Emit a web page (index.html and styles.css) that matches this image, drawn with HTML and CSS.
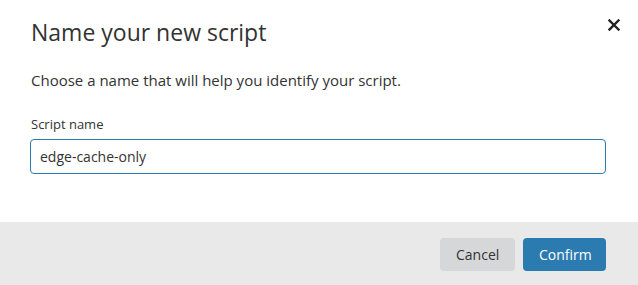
FILE: index.html
```html
<!DOCTYPE html>
<html lang="en">
  <head>
    <meta charset="UTF-8" />
    <meta name="viewport" content="width=device-width, initial-scale=1.0" />
    <title>Name your new script</title>
    <link rel="stylesheet" href="styles.css">
  </head>

  <body>
    <div class="modal">
      <div class="modal-header">
        <h2>Name your new script</h2>
        <button class="close-btn" aria-label="Close">
          <svg width="12" height="12" viewBox="0 0 12 12">
            <path d="M1.5 1.5 L10.5 10.5 M10.5 1.5 L1.5 10.5" stroke="#222" stroke-width="2.4" stroke-linecap="square" />
          </svg>
        </button>
      </div>

      <div class="modal-body">
        <p class="intro">Choose a name that will help you identify your script.</p>

        <div class="form-group">
          <label for="scriptName">Script name</label>
          <input type="text" id="scriptName" value="edge-cache-only" />
        </div>
      </div>

      <div class="modal-footer">
        <button class="btn btn-secondary">Cancel</button>
        <button class="btn btn-primary">Confirm</button>
      </div>
    </div>
  </body>
</html>
```

FILE: styles.css
```css
:root {
  --text-color: #333;
  --primary-color: #2b7bb1;
  --footer-bg: #e8e9e8;
}

* {
  margin: 0;
  padding: 0;
  box-sizing: border-box;
  font-family: "Open Sans", "Noto Sans", sans-serif;
}

body {
  background: #fff;
  width: 638px;
  height: 285px;
  overflow: hidden;
}

.modal {
  width: 638px;
  height: 285px;
  display: flex;
  flex-direction: column;
}

.modal-header {
  display: flex;
  justify-content: space-between;
  align-items: flex-start;
  padding: 16px 18px 0 31px;
}

.modal-header h2 {
  font-size: 23px;
  font-weight: 400;
  color: var(--text-color);
  line-height: 32px;
}

.close-btn {
  background: none;
  border: none;
  padding: 0;
  margin-top: 1px;
  cursor: pointer;
}

.modal-body {
  padding: 21px 32px 0 30px;
  flex: 1;
}

.intro {
  font-size: 15px;
  color: var(--text-color);
  line-height: 22px;
  padding-left: 1px;
  margin-bottom: 24px;
}

.form-group label {
  display: block;
  font-size: 13px;
  color: var(--text-color);
  line-height: 18px;
  margin-bottom: 6px;
  padding-left: 1px;
}

.form-group input {
  width: 576px;
  height: 35px;
  border: 1px solid var(--primary-color);
  border-radius: 4px;
  padding: 0 9px;
  font-size: 14px;
  color: var(--text-color);
  outline: none;
}

.modal-footer {
  background: var(--footer-bg);
  height: 63px;
  display: flex;
  justify-content: flex-end;
  align-items: flex-start;
  gap: 8px;
  padding: 16px 32px 0 0;
}

.btn {
  height: 33px;
  border: none;
  border-radius: 4px;
  font-size: 14px;
  padding: 0 16px;
  cursor: pointer;
}

.btn-secondary {
  width: 75px;
  background: #d6d7d8;
  color: var(--text-color);
}

.btn-primary {
  width: 83px;
  background: var(--primary-color);
  color: #fff;
}
```
